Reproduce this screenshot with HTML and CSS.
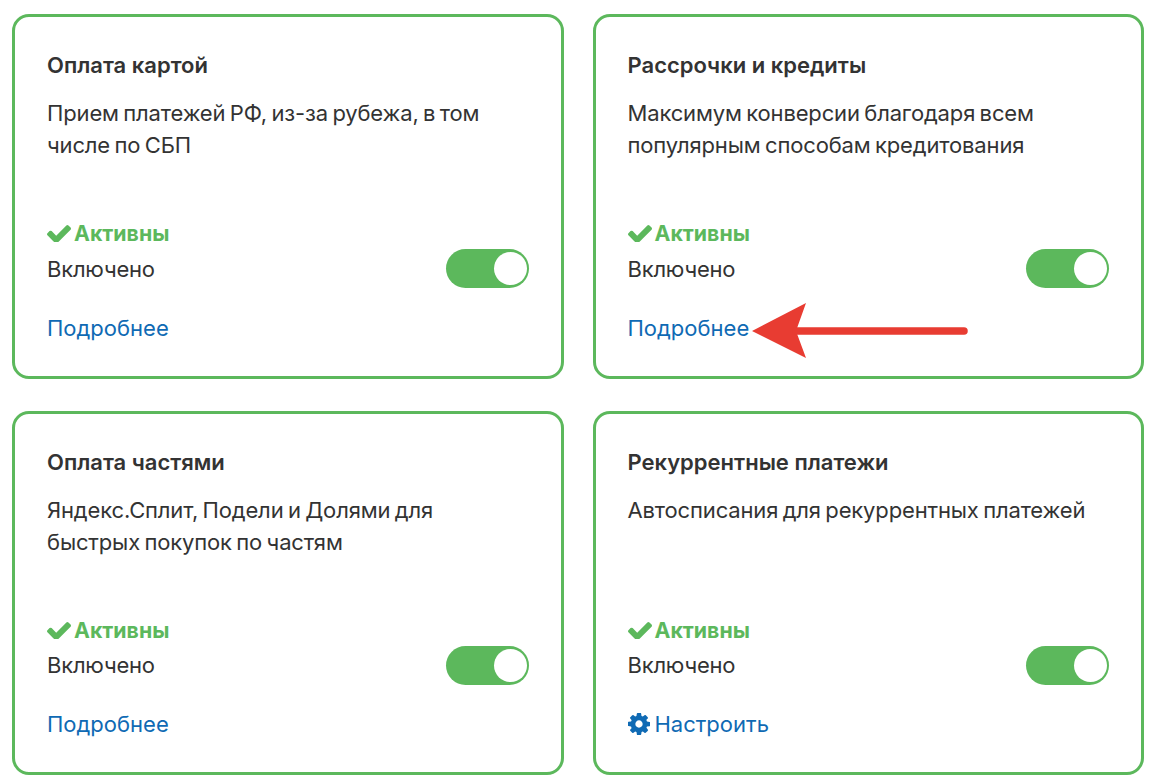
FILE: index.html
```html
<!DOCTYPE html>
<html lang="ru">
<head>
<meta charset="utf-8">
<title>Способы оплаты</title>
<link rel="stylesheet" href="styles.css">
</head>
<body>
<main class="grid">
  <section class="card">
    <h2 class="title">Оплата картой</h2>
    <p class="desc">Прием платежей РФ, из-за рубежа, в том<br>числе по СБП</p>
    <div class="status"><svg class="check" viewBox="121 270 1550 1152"><path d="M1671 566q0 40-28 68l-724 724-136 136q-28 28-68 28t-68-28l-136-136-362-362q-28-28-28-68t28-68l136-136q28-28 68-28t68 28l294 295 656-657q28-28 68-28t68 28l136 136q28 28 28 68z"/></svg>Активны</div>
    <div class="row"><span>Включено</span><span class="toggle"><span class="knob"></span></span></div>
    <a class="link" href="#">Подробнее</a>
  </section>
  <section class="card">
    <h2 class="title">Рассрочки и кредиты</h2>
    <p class="desc">Максимум конверсии благодаря всем<br>популярным способам кредитования</p>
    <div class="status"><svg class="check" viewBox="121 270 1550 1152"><path d="M1671 566q0 40-28 68l-724 724-136 136q-28 28-68 28t-68-28l-136-136-362-362q-28-28-28-68t28-68l136-136q28-28 68-28t68 28l294 295 656-657q28-28 68-28t68 28l136 136q28 28 28 68z"/></svg>Активны</div>
    <div class="row"><span>Включено</span><span class="toggle"><span class="knob"></span></span></div>
    <a class="link" href="#">Подробнее</a>
  </section>
  <section class="card">
    <h2 class="title">Оплата частями</h2>
    <p class="desc">Яндекс.Сплит, Подели и Долями для<br>быстрых покупок по частям</p>
    <div class="status"><svg class="check" viewBox="121 270 1550 1152"><path d="M1671 566q0 40-28 68l-724 724-136 136q-28 28-68 28t-68-28l-136-136-362-362q-28-28-28-68t28-68l136-136q28-28 68-28t68 28l294 295 656-657q28-28 68-28t68 28l136 136q28 28 28 68z"/></svg>Активны</div>
    <div class="row"><span>Включено</span><span class="toggle"><span class="knob"></span></span></div>
    <a class="link" href="#">Подробнее</a>
  </section>
  <section class="card">
    <h2 class="title">Рекуррентные платежи</h2>
    <p class="desc">Автосписания для рекуррентных платежей</p>
    <div class="status"><svg class="check" viewBox="121 270 1550 1152"><path d="M1671 566q0 40-28 68l-724 724-136 136q-28 28-68 28t-68-28l-136-136-362-362q-28-28-28-68t28-68l136-136q28-28 68-28t68 28l294 295 656-657q28-28 68-28t68 28l136 136q28 28 28 68z"/></svg>Активны</div>
    <div class="row"><span>Включено</span><span class="toggle"><span class="knob"></span></span></div>
    <a class="link" href="#"><svg class="gear" viewBox="128 128 1536 1536"><path d="M1152 896q0-106-75-181t-181-75-181 75-75 181 75 181 181 75 181-75 75-181zm512-109v222q0 12-8 23t-20 13l-185 28q-19 54-39 91 35 50 107 138 10 12 10 25t-9 23q-27 37-99 108t-94 71q-12 0-26-9l-138-108q-44 23-91 38-16 136-29 186-7 28-36 28h-222q-14 0-24.5-8.5t-11.5-21.5l-28-184q-49-16-90-37l-141 107q-10 9-25 9-14 0-25-11-126-114-165-168-7-10-7-23 0-12 8-23 15-21 51-66.5t54-70.5q-27-50-41-99l-183-27q-13-2-21-12.5t-8-23.5v-222q0-12 8-23t19-13l186-28q14-46 39-92-40-57-107-138-10-12-10-24 0-10 9-23 26-36 98.5-107.5t94.5-71.5q13 0 26 10l138 107q44-23 91-38 16-136 29-186 7-28 36-28h222q14 0 24.5 8.5t11.5 21.5l28 184q49 16 90 37l142-107q9-9 24-9 13 0 25 10 129 119 165 170 7 8 7 22 0 12-8 23-15 21-51 66.5t-54 70.5q26 50 41 98l183 28q13 2 21 12.5t8 23.5z"/></svg>Настроить</a>
  </section>
</main>
<svg class="arrow" viewBox="0 0 220 58" width="220" height="58"><path d="M2 28 56 0 46 28 56 55Z"/><path class="shaft" d="M46 28H214"/></svg>
</body>
</html>
```
FILE: styles.css
```css
* { box-sizing: border-box; }
html, body { margin: 0; height: 100%; background: #fff; overflow: hidden; }
body {
  position: relative;
  padding: 14px 14px 0 12px;
  font-family: Inter, "Noto Sans", sans-serif;
  font-size: 22px;
  line-height: 32px;
  color: #333;
}
.grid {
  display: grid;
  grid-template-columns: 552px 551.5px;
  grid-auto-rows: 364.6px;
  column-gap: 28.5px;
  row-gap: 32px;
}
.card {
  display: flex;
  flex-direction: column;
  padding: 32px 32px 0;
  border: 3px solid #5cb85c;
  border-radius: 17px;
}
.title { margin: 0; font-size: 22px; line-height: 32px; font-weight: 600; }
.desc { margin: 16px 0 0; height: 120px; font-weight: 400; letter-spacing: -0.15px; word-spacing: -1.6px; }
.status {
  display: flex;
  align-items: center;
  gap: 3px;
  font-size: 21.3px;
  font-weight: 700;
  color: #5cb85c;
}
.check { width: 24px; height: 18px; fill: currentColor; flex: none; }
.gear { width: 22px; height: 22px; fill: currentColor; flex: none; }
.row {
  display: flex;
  align-items: center;
  justify-content: space-between;
  height: 39px;
  margin-top: 0.1px;
  letter-spacing: -0.2px;
}
.toggle {
  display: flex;
  justify-content: flex-end;
  align-items: center;
  width: 83px;
  height: 39px;
  padding: 0 2px;
  border-radius: 20px;
  background: #5cb85c;
}
.knob { width: 33px; height: 33px; border-radius: 50%; background: #fff; }
.link {
  display: flex;
  align-items: center;
  gap: 5px;
  margin-top: 23.7px;
  color: #0f6ab4;
  text-decoration: none;
}
.arrow { position: absolute; left: 750px; top: 303px; }
.arrow path { fill: #e83c32; }
.arrow .shaft { fill: none; stroke: #e83c32; stroke-width: 7.5; stroke-linecap: round; }
```
